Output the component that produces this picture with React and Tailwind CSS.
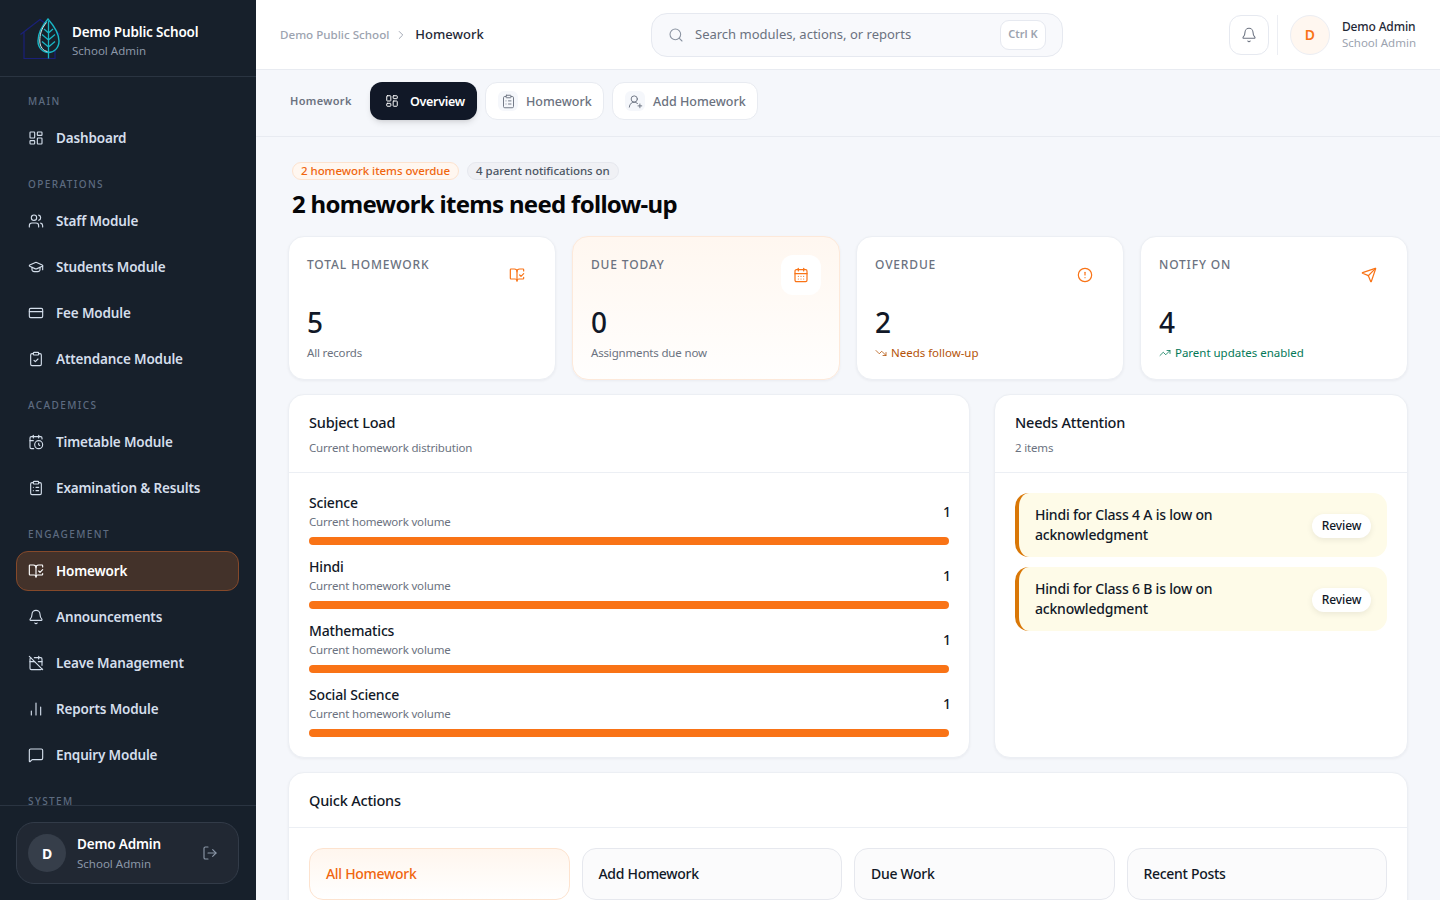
import React from "react";
import {
  LayoutDashboard, Users, GraduationCap, CreditCard, ClipboardCheck, CalendarClock, ClipboardList,
  BookOpenCheck, Bell, CalendarOff, ChartNoAxesColumn, MessageSquare, LogOut, Search, ChevronRight,
  UserRoundPlus, CalendarDays, CircleAlert, Send, TrendingDown, TrendingUp,
} from "lucide-react";

const sections = [
  { label: "MAIN", items: [["Dashboard", LayoutDashboard]] },
  { label: "OPERATIONS", items: [["Staff Module", Users], ["Students Module", GraduationCap], ["Fee Module", CreditCard], ["Attendance Module", ClipboardCheck]] },
  { label: "ACADEMICS", items: [["Timetable Module", CalendarClock], ["Examination & Results", ClipboardList]] },
  { label: "ENGAGEMENT", items: [["Homework", BookOpenCheck, true], ["Announcements", Bell], ["Leave Management", CalendarOff], ["Reports Module", ChartNoAxesColumn], ["Enquiry Module", MessageSquare]] },
  { label: "SYSTEM", items: [] },
];

function Logo() {
  return (
    <svg width="44" height="44" viewBox="0 0 44 44" fill="none" className="shrink-0">
      <path d="M0.500 18.500 L20 3.500 L40 18.500 M4 16 V42.500 H35 V16" stroke="#1a2078" strokeWidth="1.2" />
      <path d="M28 3 C21 11 18 18 18 25 C18 32 23 36.500 28.500 36.500 C34 36.500 39 32 39 25 C39 18 35 11 28 3 Z" fill="#17202b" stroke="#19b5c4" strokeWidth="1.4" />
      <path d="M26.500 6.500 C21 13 19.800 19 19.800 25 C19.800 31 23.500 35 27.500 35.500" stroke="#d5eef0" strokeWidth="1" />
      <path d="M28.500 5 V42.500 M28.500 17 L33 13 M28.500 17 L24 13 M28.500 24 L35 18.500 M28.500 24 L22 18.500 M28.500 31 L35 25.500 M28.500 31 L22 25.500" stroke="#19b5c4" strokeWidth="1.3" />
    </svg>
  );
}

function Sidebar() {
  return (
    <aside className="w-64 h-screen shrink-0 bg-[#17202b] flex flex-col">
      <div className="h-[77px] shrink-0 border-b border-[#2a3441] flex items-center gap-[8px] pl-[20px]">
        <Logo />
        <div className="mt-[4px]">
          <div className="text-[13.5px] tracking-[-0.15px] leading-[20px] font-semibold text-white">Demo Public School</div>
          <div className="text-[11.5px] leading-[16px] text-[#8b97a8] mt-[1px]">School Admin</div>
        </div>
      </div>
      <nav className="flex-1 overflow-hidden pl-4 pr-[17px] pt-[15px]">
        {sections.map((s) => (
          <div key={s.label} className="mb-[17px]">
            <div className="px-3 h-[18px] leading-[18px] text-[10px] font-medium tracking-[0.14em] text-[#5d6b80]">{s.label}</div>
            <div className="mt-[8px] flex flex-col gap-[6px]">
              {s.items.map(([name, Icon, active]) => (
                <div key={name} className={`h-[40px] flex items-center gap-[12px] px-[11px] rounded-[12px] border text-[13.5px] tracking-[-0.15px] font-semibold ${active ? "bg-[#43322a] border-[#85492a] text-white" : "border-transparent text-[#d4deeb]"}`}>
                  <Icon size={16} strokeWidth={1.7} className="shrink-0" />
                  <span>{name}</span>
                </div>
              ))}
            </div>
          </div>
        ))}
      </nav>
      <div className="h-[95px] shrink-0 border-t border-[#2a3441] pl-4 pr-[17px] pt-[16px]">
        <div className="h-[62px] rounded-[18px] border border-[#323b48] bg-[#212833] flex items-center px-[11px]">
          <div className="w-[38px] h-[38px] rounded-full bg-[#363e4a] flex items-center justify-center text-white text-[14px] font-bold">D</div>
          <div className="ml-[11px] flex-1 mt-[1px]">
            <div className="text-[13.5px] tracking-[-0.15px] leading-[18px] font-semibold text-white">Demo Admin</div>
            <div className="text-[11.5px] leading-[16px] mt-[3px] text-[#8b97a8]">School Admin</div>
          </div>
          <LogOut size={16} strokeWidth={1.7} className="text-[#8b97a8] mr-[9px]" />
        </div>
      </div>
    </aside>
  );
}

function Topbar() {
  return (
    <header className="h-[70px] shrink-0 bg-white border-b border-[#e8ebf1] flex items-center pl-6 pr-6">
      <div className="w-[371px] flex items-center text-[13px] pt-[1px]">
        <span className="text-[11.6px] font-medium text-[#9ca3af]">Demo Public School</span>
        <ChevronRight size={14} strokeWidth={1.6} className="text-[#9ca3af] mx-[6px] -translate-x-[1px]" />
        <span className="font-medium text-[#1f2937]">Homework</span>
      </div>
      <div className="w-[412px] h-[44px] rounded-[16px] border border-[#e6e9f0] bg-[#f8f9fc] flex items-center pl-[16px] pr-[16px]">
        <Search size={16} strokeWidth={1.6} className="text-[#8a93a1]" />
        <span className="ml-[11px] flex-1 pt-[1px] text-[13px] text-[#6b7280]">Search modules, actions, or reports</span>
        <span className="h-[30px] w-[46px] rounded-[9px] border border-[#e6e9f0] bg-white flex items-center justify-center text-[11px] font-semibold text-[#9ca3af]">Ctrl K</span>
      </div>
      <div className="ml-auto flex items-center">
        <div className="w-[40px] h-[40px] rounded-[12px] border border-[#e6e9f0] bg-white flex items-center justify-center">
          <Bell size={16} strokeWidth={1.6} className="text-[#6b7280]" />
        </div>
        <div className="w-px h-[40px] bg-[#eceef3] ml-[8px] mr-[12px]" />
        <div className="w-[40px] h-[40px] rounded-full border border-[#eceef3] bg-[#fff7f0] flex items-center justify-center text-[14px] font-semibold text-[#f97316]">D</div>
        <div className="ml-[12px]">
          <div className="text-[12px] tracking-[-0.15px] leading-[16px] font-medium text-[#1f2937]">Demo Admin</div>
          <div className="text-[11.5px] leading-[16px] text-[#9ca3af]">School Admin</div>
        </div>
      </div>
    </header>
  );
}

function Tabs() {
  return (
    <div className="h-[67px] shrink-0 border-b border-[#e8ebf1] flex items-center pl-[34px] gap-[8px] pb-[4px]">
      <span className="w-[72px] text-[11px] font-semibold tracking-[0.03em] text-[#6b7280]">Homework</span>
      <div className="h-[38px] w-[107px] rounded-[12px] bg-[#111827] shadow-md flex items-center pl-[15px] gap-[11px] text-white text-[12.5px] tracking-[-0.3px] font-semibold">
        <LayoutDashboard size={14} strokeWidth={1.7} />
        <span className="pt-[3px]">Overview</span>
      </div>
      <div className="h-[38px] w-[119px] rounded-[12px] border border-[#e8ebf1] bg-white flex items-center pl-[12px] gap-[8px] text-[12.5px] font-medium text-[#6b7280]">
        <span className="w-[20px] h-[20px] rounded-[6px] bg-[#f5f7fb] flex items-center justify-center"><ClipboardList size={15} strokeWidth={1.5} /></span>
        <span className="pt-[3px]">Homework</span>
      </div>
      <div className="h-[38px] w-[146px] rounded-[12px] border border-[#e8ebf1] bg-white flex items-center pl-[12px] gap-[8px] text-[12.5px] font-medium text-[#6b7280]">
        <span className="w-[20px] h-[20px] rounded-[6px] bg-[#f5f7fb] flex items-center justify-center"><UserRoundPlus size={15} strokeWidth={1.5} /></span>
        <span className="pt-[3px]">Add Homework</span>
      </div>
    </div>
  );
}

function Stat({ label, value, Icon, sub, subClass, TrendIcon, highlight }) {
  return (
    <div className={`h-[144px] rounded-[16px] border shadow-[0_1px_3px_rgba(16,24,40,0.05)] px-[18px] pt-[18px] ${highlight ? "bg-gradient-to-b from-[#fff7f0] to-[#fffefd] border-[#fde9da]" : "bg-white border-[#eceff4]"}`}>
      <div className="flex justify-between">
        <span className="text-[12px] leading-[20px] font-medium tracking-[0.07em] text-[#6b7280]">{label}</span>
        <span className={`w-[40px] h-[40px] rounded-[12px] flex items-center justify-center text-[#f97316] ${highlight ? "bg-white" : ""}`}>
          <Icon size={16} strokeWidth={1.8} />
        </span>
      </div>
      <div className="text-[28px] leading-[36px] font-medium text-[#111827] mt-[9px]">{value}</div>
      <div className={`mt-[5px] flex items-center gap-[4px] text-[11.5px] leading-[16px] ${TrendIcon ? "tracking-[-0.02px]" : "tracking-[-0.17px]"} ${subClass}`}>
        {TrendIcon && <TrendIcon size={12} strokeWidth={1.6} />}
        <span>{sub}</span>
      </div>
    </div>
  );
}

function SubjectRow({ name }) {
  return (
    <div className="h-[53px] mb-[11px]">
      <div className="flex justify-between items-center h-[39px]">
        <div>
          <div className="text-[14px] tracking-[-0.17px] leading-[20px] font-medium text-[#111827]">{name}</div>
          <div className="text-[11.5px] tracking-[-0.17px] leading-[16px] mt-[1px] text-[#6b7280]">Current homework volume</div>
        </div>
        <span className="text-[14px] font-medium text-[#111827] -mr-[2px] -mt-[1px]">1</span>
      </div>
      <div className="h-[8px] mt-[6px] rounded-full bg-[#f97316]" />
    </div>
  );
}

function Attention({ text }) {
  return (
    <div className="h-[64px] rounded-[14px] border-l-4 border-[#d97706] bg-[#fefbe8] flex items-center pl-[16px] pr-[16px]">
      <div className="w-[220px] text-[14px] tracking-[-0.2px] leading-[20px] font-medium text-[#111827]">{text}</div>
      <span className="ml-auto mt-[1px] h-[24px] w-[59px] rounded-full bg-white shadow-[0_2px_6px_rgba(0,0,0,0.08)] flex items-center justify-center text-[12px] tracking-[-0.1px] font-medium text-[#111827]">Review</span>
    </div>
  );
}

export default function App() {
  return (
    <div className="h-screen flex overflow-hidden bg-[#f5f7fb] font-['Noto_Sans',sans-serif]">
      <Sidebar />
      <div className="flex-1 min-w-0 flex flex-col h-screen overflow-hidden">
        <Topbar />
        <Tabs />
        <main className="flex-1 overflow-hidden px-8 pt-[25px]">
          <div className="pl-[4px] flex gap-[8px]">
            <span className="h-[18px] px-[8px] rounded-full border border-[#fde3cf] bg-[#fff7f0] text-[11.5px] tracking-[-0.05px] leading-[16px] font-medium text-[#f0660f]">2 homework items overdue</span>
            <span className="h-[18px] px-[8px] rounded-full border border-[#e6e8ee] bg-[#f0f1f5] text-[11.5px] tracking-[-0.05px] leading-[16px] font-medium text-[#4b5563]">4 parent notifications on</span>
          </div>
          <h1 className="pl-[4px] mt-[7px] text-[24px] tracking-[-0.7px] leading-[34px] font-bold text-[#050608]">2 homework items need follow-up</h1>
          <div className="grid grid-cols-4 gap-[16px] mt-[15px]">
            <Stat label="TOTAL HOMEWORK" value="5" Icon={BookOpenCheck} sub="All records" subClass="text-[#6b7280]" />
            <Stat label="DUE TODAY" value="0" Icon={CalendarDays} sub="Assignments due now" subClass="text-[#6b7280]" highlight />
            <Stat label="OVERDUE" value="2" Icon={CircleAlert} sub="Needs follow-up" subClass="text-[#b45309]" TrendIcon={TrendingDown} />
            <Stat label="NOTIFY ON" value="4" Icon={Send} sub="Parent updates enabled" subClass="text-[#047857]" TrendIcon={TrendingUp} />
          </div>
          <div className="grid grid-cols-[682px_414px] gap-[24px] mt-[14px]">
            <section className="h-[364px] rounded-[16px] border border-[#eceff4] bg-white shadow-[0_1px_3px_rgba(16,24,40,0.05)]">
              <div className="h-[78px] border-b border-[#eceff4] px-[20px] pt-[15px]">
                <div className="text-[14.5px] tracking-[-0.2px] leading-[24px] font-medium text-[#111827]">Subject Load</div>
                <div className="text-[11.5px] tracking-[-0.17px] leading-[16px] mt-[6px] text-[#6b7280]">Current homework distribution</div>
              </div>
              <div className="px-[20px] pt-[19px]">
                {["Science", "Hindi", "Mathematics", "Social Science"].map((n) => <SubjectRow key={n} name={n} />)}
              </div>
            </section>
            <section className="h-[364px] rounded-[16px] border border-[#eceff4] bg-white shadow-[0_1px_3px_rgba(16,24,40,0.05)]">
              <div className="h-[78px] border-b border-[#eceff4] px-[20px] pt-[15px]">
                <div className="text-[14.5px] tracking-[-0.2px] leading-[24px] font-medium text-[#111827]">Needs Attention</div>
                <div className="text-[11.5px] tracking-[-0.17px] leading-[16px] mt-[6px] text-[#6b7280]">2 items</div>
              </div>
              <div className="px-[20px] pt-[20px] flex flex-col gap-[10px]">
                <Attention text="Hindi for Class 4 A is low on acknowledgment" />
                <Attention text="Hindi for Class 6 B is low on acknowledgment" />
              </div>
            </section>
          </div>
          <section className="mt-[14px] h-[300px] rounded-[16px] border border-[#eceff4] bg-white shadow-[0_1px_3px_rgba(16,24,40,0.05)]">
            <div className="h-[55px] border-b border-[#eceff4] px-[20px] pt-[2px] flex items-center text-[14.5px] tracking-[-0.2px] font-medium text-[#111827]">Quick Actions</div>
            <div className="grid grid-cols-4 gap-[12px] px-[20px] pt-[20px]">
              <div className="h-[52px] rounded-[14px] border border-[#fde3cf] bg-gradient-to-b from-[#fff6ee] to-white flex items-center px-[16px] pb-[1px] text-[14px] tracking-[-0.3px] font-medium text-[#f0660f]">All Homework</div>
              {["Add Homework", "Due Work", "Recent Posts"].map((t) => (
                <div key={t} className="h-[52px] rounded-[14px] border border-[#e6e8ee] bg-[#fbfbfc] flex items-center px-[16px] pb-[1px] text-[14px] tracking-[-0.3px] font-medium text-[#111827]">{t}</div>
              ))}
            </div>
          </section>
        </main>
      </div>
    </div>
  );
}
